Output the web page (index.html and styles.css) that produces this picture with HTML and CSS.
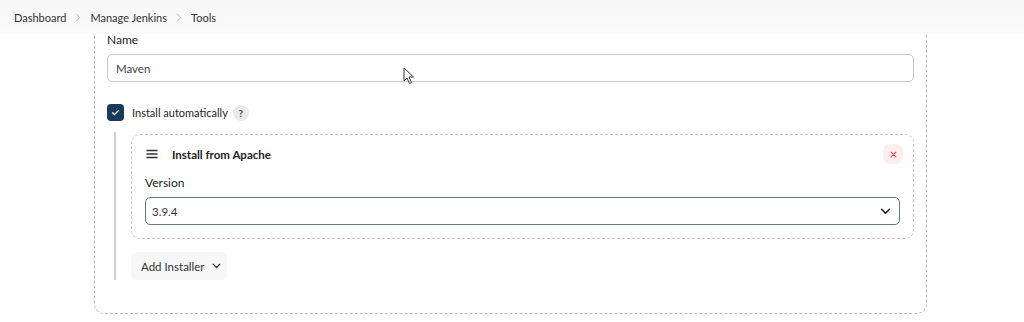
FILE: index.html
```html
<!DOCTYPE html>
<html>
<head>
<meta charset="utf-8">
<link rel="stylesheet" href="styles.css">
</head>
<body>
<header class="topbar">
  <nav class="crumbs">
    <span class="crumb">Dashboard</span>
    <svg class="sep" viewBox="0 0 10 12" width="8" height="11"><path d="M3 1.5 L7 6 L3 10.5" fill="none" stroke="#a8a8a8" stroke-width="1.1"/></svg>
    <span class="crumb">Manage Jenkins</span>
    <svg class="sep" viewBox="0 0 10 12" width="8" height="11"><path d="M3 1.5 L7 6 L3 10.5" fill="none" stroke="#a8a8a8" stroke-width="1.1"/></svg>
    <span class="crumb">Tools</span>
  </nav>
</header>
<main class="page">
  <section class="outer">
    <label class="label name-label">Name</label>
    <div class="input">Maven</div>
    <div class="check-row">
      <span class="checkbox"><svg viewBox="0 0 16 16" width="11" height="11"><path d="M3.5 8.5 L6.5 11 L12.5 5" fill="none" stroke="#fff" stroke-width="1.8" stroke-linecap="round" stroke-linejoin="round"/></svg></span>
      <span class="check-label">Install automatically</span>
      <span class="help">?</span>
    </div>
    <div class="nested">
      <div class="installer">
        <div class="inst-head">
          <svg class="drag" viewBox="0 0 12 10" width="12" height="10"><path d="M0.5 1.5 H11.5 M0.5 5 H11.5 M0.5 8.5 H11.5" stroke="#333" stroke-width="1.3"/></svg>
          <span class="inst-title">Install from Apache</span>
          <span class="delete"><svg viewBox="0 0 10 10" width="7" height="7"><path d="M1.5 1.5 L8.5 8.5 M8.5 1.5 L1.5 8.5" stroke="#e0455a" stroke-width="1.6" stroke-linecap="round"/></svg></span>
        </div>
        <label class="label version-label">Version</label>
        <div class="select">
          <span>3.9.4</span>
          <svg viewBox="0 0 12 8" width="11" height="7"><path d="M1.5 1.5 L6 6 L10.5 1.5" fill="none" stroke="#222" stroke-width="1.8" stroke-linecap="round" stroke-linejoin="round"/></svg>
        </div>
      </div>
      <div class="add-btn">
        <span>Add Installer</span>
        <svg viewBox="0 0 12 8" width="9" height="6"><path d="M1.5 1.5 L6 6 L10.5 1.5" fill="none" stroke="#333" stroke-width="1.8" stroke-linecap="round" stroke-linejoin="round"/></svg>
      </div>
    </div>
  </section>
</main>
<svg class="cursor" viewBox="0 0 12 18" width="12" height="18"><path d="M1 1 L1 14 L4 11 L6.5 16.5 L8.5 15.5 L6 10 L10.5 10 Z" fill="#fff" stroke="#333" stroke-width="1" stroke-linejoin="round"/></svg>
</body>
</html>
```
FILE: styles.css
```css
* { box-sizing: border-box; }
html, body { margin: 0; padding: 0; }
body {
  width: 1024px;
  height: 322px;
  overflow: hidden;
  background: #fff;
  font-family: Lato, "Noto Sans", "Liberation Sans", sans-serif;
  color: #222;
  position: relative;
}
.topbar {
  position: relative;
  z-index: 2;
  height: 34px;
  background: linear-gradient(#f7f7f7, #f9f9f9 80%, #fbfbfb);
  display: flex;
  align-items: center;
  padding-left: 14px;
}
.crumbs {
  display: flex;
  align-items: center;
  font-size: 11px;
  color: #333;
}
.sep { margin: 0 8px 0 8px; }
.page {
  margin-top: -30px;
  padding-left: 94px;
}
.outer {
  width: 833px;
  border: 1px dashed #b8b8b8;
  border-radius: 10px;
  padding: 27px 12px 33px 12px;
}
.label {
  display: block;
  font-size: 12px;
  font-weight: 400;
  color: #222;
  line-height: 16px;
}
.name-label { margin-bottom: 6px; }
.input {
  height: 28px;
  border: 1px solid #c9c9c9;
  border-radius: 5px;
  font-size: 11.5px;
  color: #444;
  display: flex;
  align-items: center;
  padding-left: 8px;
}
.check-row {
  display: flex;
  align-items: center;
  margin-top: 22px;
  height: 17px;
}
.checkbox {
  width: 17px;
  height: 17px;
  border-radius: 4px;
  background: #1a3a5c;
  display: flex;
  align-items: center;
  justify-content: center;
}
.check-label {
  margin-left: 8px;
  font-size: 11px;
  font-weight: 400;
  color: #1e1e1e;
}
.help {
  margin-left: 5px;
  width: 16px;
  height: 16px;
  border-radius: 50%;
  background: #e9e9e9;
  color: #444;
  font-size: 10px;
  font-weight: 700;
  display: flex;
  align-items: center;
  justify-content: center;
}
.nested {
  margin-top: 11px;
  margin-left: 7px;
  border-left: 2px solid #cfcfcf;
  padding: 2px 0 0 15px;
}
.installer {
  border: 1px dashed #c4c4c4;
  border-radius: 9px;
  padding: 9px 13px 13px 13px;
}
.inst-head {
  display: flex;
  align-items: center;
  height: 20px;
  margin-bottom: 11px;
}
.drag { margin-left: 1px; }
.inst-title {
  margin-left: 14px;
  font-size: 11.5px;
  font-weight: 700;
  color: #222;
}
.delete {
  margin-left: auto;
  margin-right: -3px;
  width: 20px;
  height: 20px;
  border-radius: 7px;
  background: #fdeeee;
  display: flex;
  align-items: center;
  justify-content: center;
}
.version-label { margin-bottom: 6px; }
.select {
  height: 28px;
  border: 1.5px solid #66778a;
  border-radius: 5px;
  display: flex;
  align-items: center;
  justify-content: space-between;
  padding: 0 8px 0 6px;
  font-size: 11.5px;
  color: #333;
}
.add-btn {
  margin-top: 13px;
  width: 96px;
  height: 28px;
  border-radius: 6px;
  background: #f7f7f7;
  display: flex;
  align-items: center;
  padding-left: 10px;
  gap: 7px;
  font-size: 11.5px;
  color: #333;
}
.cursor {
  position: absolute;
  left: 403px;
  top: 67px;
  z-index: 3;
}
```
